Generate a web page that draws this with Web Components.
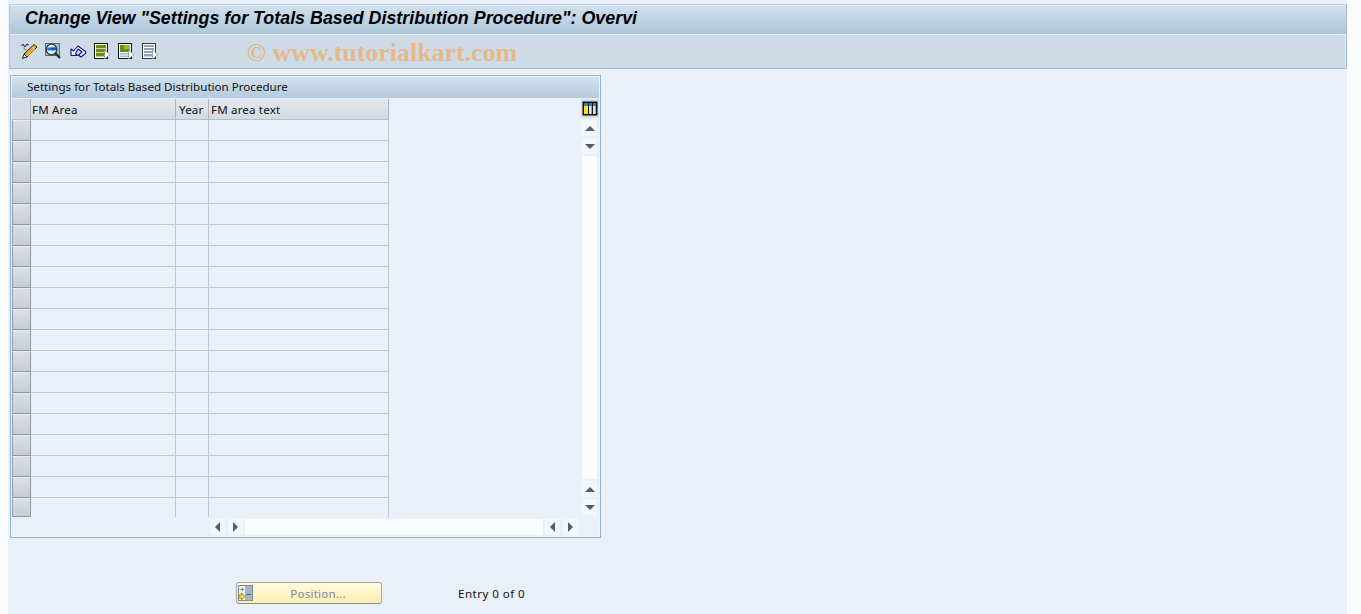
<!DOCTYPE html>
<html><head><meta charset="utf-8"><style>
html,body{margin:0;padding:0;background:#fbfcfe;overflow:hidden}
body{font-family:"Noto Sans","DejaVu Sans",sans-serif;font-size:11.600px;color:#000}
</style></head><body>
<sap-screen>
  <sap-header title-text='Change View "Settings for Totals Based Distribution Procedure": Overvi' mark="© www.tutorialkart.com"></sap-header>
  <sap-table caption="Settings for Totals Based Distribution Procedure" rows="19"></sap-table>
  <sap-footer></sap-footer>
</sap-screen>
<script>
const ICONS = {
 edit:`<svg width="17" height="16" viewBox="0 0 17 16"><path d="M.5 3c1-2 2-2 2.500-.5S4.500 4 5.500 2c.7-1.300 1.500-1 2 .3" fill="none" stroke="#333" stroke-width="1.100"/><path d="M3 4.500c0 1.500 1 2.500 2.500 2" fill="none" stroke="#666" stroke-width="1"/><path d="M13 1.500l3 2.500L6 14l-3-3z" fill="#f5a52a" stroke="#222" stroke-width="1"/><path d="M3 11l3 3-4.500 1.500z" fill="#f8e3b8" stroke="#222" stroke-width="1"/><path d="M11.500 4l2 2-7 7" fill="none" stroke="#ffd27a" stroke-width="1"/></svg>`,
 find:`<svg width="16" height="16" viewBox="0 0 16 16"><rect x=".5" y=".5" width="14" height="12" fill="#aebccb" stroke="#5b6a7c"/><circle cx="6.500" cy="6.500" r="5.300" fill="#e3f0fb" stroke="#2c3a4a" stroke-width="1.300"/><path d="M2.200 4.500h8.600v3H2.200z" fill="#1a78e6"/><path d="M6 4.500h5v2H6z" fill="#0f4fb0"/><path d="M10 10l5 5" stroke="#2a2a2a" stroke-width="2.200"/></svg>`,
 undo:`<svg width="17" height="16" viewBox="0 0 17 16"><path d="M1 12.500V6l2.500 2L8 3l7.500 5.500q.8 1-.2 2L11 14l-2.500-2L12 9 8 6l-2.500 4.500 2 2z" fill="#f4f7fb" stroke="#10109a" stroke-width="1.100" stroke-linejoin="round"/></svg>`,
 d1:`<svg width="17" height="16" viewBox="0 0 17 16"><rect x=".5" y=".5" width="13" height="15" fill="#fff" stroke="#111"/><path d="M2 2h10v3H2zM2 6h10v3H2zM2 10h10v3.500H2z" fill="#728c10"/><path d="M2 5h10v1H2zM2 9h10v1H2z" fill="#cbd8a0"/><path d="M10.500 7l5.500 4.500-5.500 4.500z" fill="#fff" stroke="#8a8a8a" stroke-width=".7"/></svg>`,
 d2:`<svg width="17" height="16" viewBox="0 0 17 16"><rect x=".5" y=".5" width="13" height="15" fill="#fff" stroke="#111"/><path d="M2 2h10v7H2z" fill="#728c10"/><path d="M6 2h6v4H6z" fill="#a4bd2e"/><path d="M2 10h10v1.500H2zM2 12.500h10V14H2z" fill="#9fb7cc"/><path d="M10.500 7l5.500 4.500-5.500 4.500z" fill="#fff" stroke="#8a8a8a" stroke-width=".7"/></svg>`,
 d3:`<svg width="17" height="16" viewBox="0 0 17 16"><rect x=".5" y=".5" width="13" height="15" fill="#fff" stroke="#2d3a48"/><path d="M2 2h10v2H2zM2 5h10v2H2zM2 8h10v2H2zM2 11h10v2.500H2z" fill="#8ea6bd"/><path d="M10.500 7l5.500 4.500-5.500 4.500z" fill="#fff" stroke="#8a8a8a" stroke-width=".7"/></svg>`,
 pos:`<svg width="15" height="16" viewBox="0 0 15 16"><rect x=".5" y=".5" width="14" height="15" fill="#eef1f4" stroke="#7d8a99"/><rect x="7" y="1" width="7" height="14" fill="#a9b4c2"/><path d="M8 9.500h5" stroke="#5b6878"/><path d="M1.500 4.500h4M4 3l1.500 1.500L4 6" fill="none" stroke="#7d8a99"/><path d="M.8 10h2.700V8l3.500 3.500L3.500 15v-2H.8z" fill="#f5e23c" stroke="#7c6d10" stroke-width=".7"/></svg>`,
 cols:`<svg width="16" height="15" viewBox="0 0 16 15"><rect x=".5" y=".5" width="15" height="14" fill="#111"/><path d="M2 2h4v3H2zM7 2h3v3H7zM11 2h3v3h-3z" fill="#2f7fd0"/><path d="M2 5h4v8H2z" fill="#f7e600"/><path d="M7 5h3v8H7zM11 5h3v8h-3z" fill="#dfe3e8"/><path d="M9 5h1v8H9zM13 5h1v8h-1z" fill="#9aa3ad"/></svg>`
};
function make(name, css, html){
  customElements.define(name, class extends HTMLElement{
    connectedCallback(){
      if(this.shadowRoot) return;
      const r=this.attachShadow({mode:"open"});
      r.innerHTML=`<style>${css}</style>`+(typeof html==="function"?html(this):html);
    }
  });
}
make("sap-screen",`:host{display:flex;flex-direction:column;width:1339px;height:614px;margin-left:8px;padding:4px 0 0 1px;box-sizing:border-box;background:#e9f0f7;overflow:hidden}`,`<slot></slot>`);
make("sap-header",`
:host{display:block;width:1338px;height:65px;box-sizing:border-box;border:1px solid #a3b8cd;border-top-color:#c3d3e3;border-left-color:#b4c6d8;flex:none}
.t{height:30px;box-sizing:border-box;border-bottom:1px solid #e6eef5;background:linear-gradient(#d0e0ed,#aec6dc);padding-left:15px;font:italic bold 17.880px/25px "Liberation Sans",sans-serif;color:#000;white-space:nowrap;overflow:hidden;border-top:1px solid #e4edf5}
.b{height:33px;background:#cddbe7;display:flex;align-items:center;padding-left:11px;box-sizing:border-box;border-right:1px solid #e0eaf3}
.i{width:24.300px;height:16px;display:block;margin-top:-1px}
.m{margin-left:80px;margin-top:3px;font:bold 25.900px "Liberation Serif",serif;color:#e6b88a;white-space:nowrap}
`,el=>`<div class="t">${el.getAttribute("title-text").replace(/"/g,"&quot;")}</div><div class="b">${["edit","find","undo","d1","d2","d3"].map(k=>`<span class="i">${ICONS[k]}</span>`).join("")}<span class="m">${el.getAttribute("mark")}</span></div>`);
make("sap-arrow",`
:host{display:flex;align-items:center;justify-content:center;width:15px;height:16px;background:#f3f6fa;flex:none}
i{display:block;width:0;height:0;border:5px solid transparent}
:host([d=up]) i{border-top:0;border-bottom:5px solid #4e5f70}
:host([d=down]) i{border-bottom:0;border-top:5px solid #4e5f70}
:host([d=left]) i{border-left:0;border-right:5px solid #4e5f70}
:host([d=right]) i{border-right:0;border-left:5px solid #4e5f70}
`,`<i></i>`);
make("sap-table",`
:host{display:block;width:591px;height:463px;margin:6px 0 0 1px;box-sizing:border-box;border:1px solid #93b0cd;padding:1px;flex:none;box-shadow:inset 0 0 0 1px #f0f5fa}
.cap{height:21px;margin-bottom:1px;background:linear-gradient(#d2e1ee,#b4cadf);padding-left:15px;line-height:20px;white-space:nowrap;color:#111}
.main{display:flex;height:418px}
.grid{width:569px;display:grid;grid-template-columns:19px 145px 33px 180px;grid-auto-rows:21px;align-content:start}
.h{background:linear-gradient(#e3e8ee,#d3dae2);border-right:1px solid #a9b5c3;border-bottom:1px solid #b4bfcb;box-sizing:border-box;padding-left:2px;line-height:21px;color:#111;white-space:nowrap;letter-spacing:.15px}
.h.a{padding-left:1px}
.h.y{padding-left:3px}
.h.c{padding:0;background:#d5dce4}
.s{background:linear-gradient(#dbdfe4,#c8cdd4);border:1px solid #8e99a7;border-top-color:#e8ecf0;box-sizing:border-box}
.d{border-right:1px solid #bcc7d3;border-bottom:1px solid #bcc7d3;box-sizing:border-box}
.last{height:19px}
.d.last{border-bottom:0}
.sb{display:flex;flex-direction:column;width:17px;margin-left:1px;align-items:flex-start}
.cb{width:18px;height:19px;background:#d5dce4;display:flex;align-items:center;justify-content:center;margin-left:-1px;margin-bottom:2px}
.sb sap-arrow+sap-arrow{margin-top:2px}
.tr{height:323px;width:15px;background:#fbfcfe;margin:2px 0}
.hs{display:flex;margin:2px 0 0 198px;height:16px}
.ht{width:298px;background:#fbfcfe;margin:0 2px}
.hs sap-arrow.g{margin-left:3px}
`,el=>{
 const n=+el.getAttribute("rows");let rows="";
 for(let i=0;i<n;i++){const l=i===n-1?" last":"";rows+=`<div class="s${l}"></div><div class="d${l}"></div><div class="d${l}"></div><div class="d${l}"></div>`;}
 return `<div class="cap">${el.getAttribute("caption")}</div>
 <div class="main"><div class="grid"><div class="h c"></div><div class="h a">FM Area</div><div class="h y">Year</div><div class="h">FM area text</div>${rows}</div>
 <div class="sb"><div class="cb">${ICONS.cols}</div><sap-arrow d="up"></sap-arrow><sap-arrow d="down"></sap-arrow><div class="tr"></div><sap-arrow d="up"></sap-arrow><sap-arrow d="down"></sap-arrow></div></div>
 <div class="hs"><sap-arrow d="left"></sap-arrow><sap-arrow class="g" d="right"></sap-arrow><div class="ht"></div><sap-arrow d="left"></sap-arrow><sap-arrow class="g" d="right"></sap-arrow></div>`;
});
make("sap-footer",`
:host{display:flex;align-items:center;height:22px;margin:44px 0 0 227px;flex:none}
.btn{width:146px;height:22px;box-sizing:border-box;border:1px solid #a8a595;border-bottom-color:#8f8e85;border-radius:3px;background:linear-gradient(#fffcdf,#fdecb4);display:flex;align-items:center;padding-left:1px;color:#7c889c}
.btn span{flex:1;text-align:center;letter-spacing:.2px;padding-left:2px}
.btn svg{flex:none}
.e{margin-left:76px;color:#111;letter-spacing:.45px}
`,`<div class="btn">${ICONS.pos}<span>Position...</span></div><div class="e">Entry 0 of 0</div>`);
</script>
</body></html>
